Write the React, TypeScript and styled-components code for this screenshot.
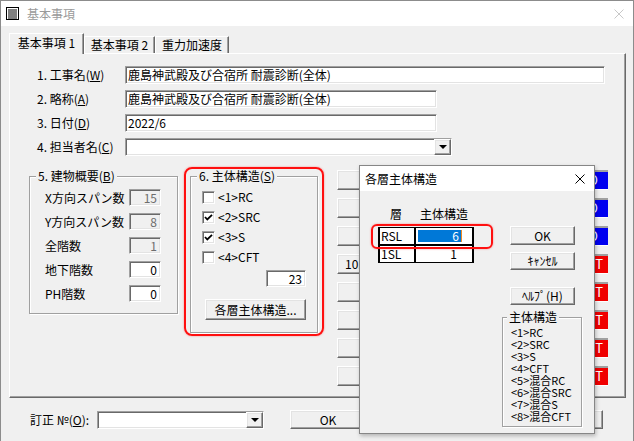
import React from "react";
import styled, { createGlobalStyle, css } from "styled-components";

const GlobalStyle = createGlobalStyle`
  html, body {
    margin: 0;
    padding: 0;
    background: #f0f0f0;
    overflow: hidden;
  }
  body {
    font-family: "Noto Sans CJK JP", "Noto Sans", sans-serif;
    font-size: 12px;
    color: #000;
  }
  * {
    box-sizing: border-box;
  }
`;

const sunken = css`
  border: 1px solid;
  border-color: #a0a0a0 #ffffff #ffffff #a0a0a0;
  box-shadow: inset 1px 1px 0 #696969, inset -1px -1px 0 #e3e3e3;
`;

const raised = css`
  border: 1px solid;
  border-color: #ffffff #696969 #696969 #ffffff;
  box-shadow: inset -1px -1px 0 #a0a0a0, inset 1px 1px 0 #e3e3e3;
  background: #f0f0f0;
`;

const Stage = styled.div`
  position: relative;
  width: 634px;
  height: 441px;
  overflow: hidden;
`;

const Window = styled.div`
  width: 634px;
  height: 441px;
  border: 1px solid #8c8c8c;
  border-bottom: none;
  background: #f0f0f0;
  display: flex;
  flex-direction: column;
`;

const TitleBar = styled.div`
  height: 25px;
  flex-shrink: 0;
  background: #ffffff;
  display: flex;
  align-items: center;
  padding: 0 9px 0 5px;
`;

const Title = styled.span<{ $inactive?: boolean }>`
  margin-left: ${(p) => (p.$inactive ? "8px" : "0")};
  color: ${(p) => (p.$inactive ? "#9a9a9a" : "#000")};
  font-size: 12px;
  line-height: 14px;
`;

const CloseBox = styled.span`
  margin-left: auto;
  display: flex;
`;

const TabStrip = styled.div`
  margin-top: 7px;
  padding-left: 8px;
  height: 20px;
  display: flex;
  align-items: flex-end;
  position: relative;
  z-index: 1;
`;

const Tab = styled.div<{ $active?: boolean; $w: number }>`
  width: ${(p) => p.$w}px;
  height: ${(p) => (p.$active ? 21 : 17)}px;
  margin-bottom: ${(p) => (p.$active ? -1 : 0)}px;
  border-left: 1px solid #ffffff;
  border-top: 1px solid #ffffff;
  border-right: 1px solid #696969;
  box-shadow: inset -1px 0 0 #a0a0a0;
  background: #f0f0f0;
  display: flex;
  align-items: center;
  justify-content: center;
  padding-bottom: ${(p) => (p.$active ? 2 : 0)}px;
  white-space: nowrap;
  line-height: 14px;
`;

const Panel = styled.div`
  margin-left: 8px;
  width: 617px;
  height: 345px;
  flex-shrink: 0;
  border-top: 1px solid #ffffff;
  border-left: 1px solid #ffffff;
  border-right: 1px solid #696969;
  border-bottom: 1px solid #696969;
  box-shadow: inset -1px -1px 0 #a0a0a0;
  padding-top: 12px;
`;

const FormGrid = styled.div`
  margin-left: 27px;
  display: grid;
  grid-template-columns: 88px auto;
  grid-auto-rows: 18px;
  row-gap: 6px;
  align-items: center;
  justify-items: start;
`;

const FieldLabel = styled.span`
  white-space: nowrap;
  line-height: 14px;
`;

const TextField = styled.div<{ $w: number }>`
  ${sunken};
  background: #ffffff;
  width: ${(p) => p.$w}px;
  height: 18px;
  padding: 0 2px;
  line-height: 16px;
  white-space: nowrap;
  overflow: hidden;
`;

const Combo = styled.div<{ $w: number }>`
  ${sunken};
  background: #ffffff;
  width: ${(p) => p.$w}px;
  height: 18px;
  display: flex;
  justify-content: flex-end;
`;

const DropButton = styled.div`
  ${raised};
  width: 17px;
  height: 16px;
  display: flex;
  align-items: center;
  justify-content: center;
`;

const Arrow = styled.span`
  width: 0;
  height: 0;
  border-left: 4px solid transparent;
  border-right: 4px solid transparent;
  border-top: 4px solid #000;
`;

const Lower = styled.div`
  margin-top: 14px;
  margin-left: 19px;
  display: flex;
  align-items: flex-start;
`;

const GroupBox = styled.div<{ $w: number; $h: number; $gap?: number }>`
  position: relative;
  margin-top: 6px;
  margin-left: ${(p) => p.$gap ?? 0}px;
  width: ${(p) => p.$w}px;
  height: ${(p) => p.$h}px;
  flex-shrink: 0;
  border: 1px solid #a0a0a0;
  box-shadow: inset 1px 1px 0 #ffffff, 1px 1px 0 #ffffff;
`;

const GroupLabel = styled.span<{ $left: number }>`
  position: absolute;
  top: -8px;
  left: ${(p) => p.$left}px;
  padding: 0 2px;
  background: #f0f0f0;
  font-size: 12px;
  line-height: 14px;
  white-space: nowrap;
`;

const BuildingGrid = styled.div`
  padding: 12px 0 0 15px;
  display: grid;
  grid-template-columns: 84px 32px;
  grid-auto-rows: 17px;
  row-gap: 7px;
  align-items: center;
`;

const NumBox = styled.div<{ $w: number; $disabled?: boolean }>`
  ${sunken};
  width: ${(p) => p.$w}px;
  height: 17px;
  background: ${(p) => (p.$disabled ? "#f0f0f0" : "#ffffff")};
  color: ${(p) => (p.$disabled ? "#6d6d6d" : "#000")};
  text-align: right;
  padding-right: 3px;
  line-height: 15px;
`;

const StructBody = styled.div`
  padding: 10px 11px 0 11px;
  display: flex;
  flex-direction: column;
`;

const CheckRow = styled.div`
  height: 20px;
  display: flex;
  align-items: center;
  gap: 3px;
  line-height: 14px;
`;

const CheckBox = styled.span`
  ${sunken};
  width: 13px;
  height: 13px;
  background: #ffffff;
  display: flex;
  align-items: center;
  justify-content: center;
`;

const EndRow = styled.div<{ $gap: number }>`
  margin-top: ${(p) => p.$gap}px;
  display: flex;
  justify-content: flex-end;
`;

const Button = styled.div<{ $w: number; $h: number }>`
  ${raised};
  width: ${(p) => p.$w}px;
  height: ${(p) => p.$h}px;
  flex-shrink: 0;
  display: flex;
  align-items: center;
  justify-content: center;
  white-space: nowrap;
  line-height: 14px;
`;

const MidColumn = styled.div`
  margin-left: 19px;
  display: flex;
  flex-direction: column;
  gap: 8px;
`;

const MidRow = styled.div`
  height: 20px;
  display: flex;
  align-items: center;
  gap: 6px;
`;

const MidButton = styled.div`
  ${raised};
  width: 217px;
  height: 20px;
  padding-left: 7px;
  display: flex;
  align-items: center;
  line-height: 14px;
`;

const ColorTag = styled.div<{ $c: string; $pad: number }>`
  width: 48px;
  height: 20px;
  background: ${(p) => p.$c};
  border-top: 2px solid #a0a0a0;
  border-bottom: 1px solid #ffffff;
  color: #ffffff;
  text-align: right;
  padding-right: ${(p) => p.$pad}px;
  font-size: 13px;
  line-height: 16px;
`;

const BottomBar = styled.div`
  flex: 1;
  display: flex;
  align-items: center;
  padding: 0 30px 0 29px;
`;

const BottomLabel = styled.span`
  width: 67px;
  white-space: nowrap;
  line-height: 14px;
`;

const Spacer = styled.div<{ $w?: number }>`
  ${(p) => (p.$w ? `width: ${p.$w}px;` : "flex: 1;")}
`;

const Dialog = styled.div`
  position: absolute;
  left: 359px;
  top: 165px;
  width: 236px;
  height: 269px;
  border: 1px solid #868686;
  background: #f0f0f0;
  box-shadow: 1px 2px 4px rgba(0, 0, 0, 0.25);
  display: flex;
  flex-direction: column;
`;

const DialogBody = styled.div`
  flex: 1;
  display: flex;
  padding: 15px 0 0 18px;
`;

const TablePane = styled.div`
  width: 96px;
  display: flex;
  flex-direction: column;
`;

const HeadRow = styled.div`
  height: 16px;
  display: flex;
  line-height: 16px;
`;

const HeadCell = styled.span<{ $w: number }>`
  width: ${(p) => p.$w}px;
  text-align: center;
`;

const LayerTable = styled.div`
  margin-top: 5px;
  display: grid;
  grid-template-columns: 36px 56px;
  grid-auto-rows: 16px;
  border: 1px solid #000;
  border-left-width: 2px;
  border-right-width: 2px;
  background: #000;
  row-gap: 2px;
`;

const LayerCell = styled.div`
  background: #ffffff;
  border-right: 2px solid #000;
  padding-left: 1px;
  line-height: 16px;
`;

const StructCell = styled.div<{ $pad: number }>`
  background: #ffffff;
  display: flex;
  align-items: center;
  justify-content: flex-end;
  padding-right: ${(p) => p.$pad}px;
  line-height: 16px;
`;

const Selected = styled.span`
  margin-left: 2px;
  flex: 1;
  height: 12px;
  background: #0078d7;
  color: #ffffff;
  text-align: right;
  padding-right: 2px;
  line-height: 12px;
  border-right: 1px solid #f08a24;
`;

const ActionPane = styled.div`
  margin-left: 28px;
  padding-top: 20px;
  display: flex;
  flex-direction: column;
  align-items: flex-start;
`;

const DialogButton = styled(Button)<{ $top: number }>`
  margin-left: 8px;
  margin-top: ${(p) => p.$top}px;
`;

const LegendBox = styled(GroupBox)`
  margin-top: 12px;
  padding: 8px 0 0 8px;
  font-size: 11px;
  line-height: 12px;
  white-space: nowrap;
`;

const Ring = styled.div<{ $r: number }>`
  position: absolute;
  border: 2px solid #ff1010;
  border-radius: ${(p) => p.$r}px;
  box-shadow: 0 0 2px rgba(255, 0, 0, 0.45);
  pointer-events: none;
`;

const GroupRing = styled(Ring)`
  left: 184px;
  top: 167px;
  width: 140px;
  height: 169px;
`;

const RowRing = styled(Ring)`
  left: 371px;
  top: 224px;
  width: 122px;
  height: 25px;
`;

const AppIcon = () => (
  <svg width="13" height="13" viewBox="0 0 13 13">
    <rect x="0.5" y="0.5" width="12" height="12" fill="#fff" stroke="#000" />
    <line x1="2" y1="3" x2="11" y2="3" stroke="#000" />
    <line x1="2" y1="5" x2="11" y2="5" stroke="#000" />
    <line x1="2" y1="7" x2="11" y2="7" stroke="#000" />
    <line x1="2" y1="9" x2="11" y2="9" stroke="#000" />
    <line x1="2" y1="11" x2="11" y2="11" stroke="#000" />
  </svg>
);

const CloseX = ({ color }: { color: string }) => (
  <svg width="10" height="10" viewBox="0 0 10 10">
    <path d="M0.5 0.5 L9.5 9.5 M9.5 0.5 L0.5 9.5" stroke={color} strokeWidth="1" />
  </svg>
);

const Check = ({ on }: { on: boolean }) => (
  <CheckBox>
    {on && (
      <svg width="9" height="9" viewBox="0 0 9 9">
        <polyline points="1,4 3.3,6.5 8,1.8" fill="none" stroke="#000" strokeWidth="1.8" />
      </svg>
    )}
  </CheckBox>
);

const building = [
  { label: "X方向スパン数", value: "15", disabled: true },
  { label: "Y方向スパン数", value: "8", disabled: true },
  { label: "全階数", value: "1", disabled: true },
  { label: "地下階数", value: "0", disabled: false },
  { label: "PH階数", value: "0", disabled: false }
];

const structures = [
  { label: "<1>RC", on: false },
  { label: "<2>SRC", on: true },
  { label: "<3>S", on: true },
  { label: "<4>CFT", on: false }
];

const blue = "#0000f0";
const red = "#f00000";

const sideRows = [
  { text: "", tag: blue, tagText: "O", pad: 10 },
  { text: "", tag: blue, tagText: "O", pad: 10 },
  { text: "", tag: blue, tagText: "O", pad: 10 },
  { text: "10.", tag: red, tagText: "T", pad: 5 },
  { text: "", tag: red, tagText: "T", pad: 5 },
  { text: "", tag: red, tagText: "T", pad: 5 },
  { text: "", tag: red, tagText: "T", pad: 5 },
  { text: "", tag: red, tagText: "T", pad: 5 }
];

const legend = [
  "<1>RC",
  "<2>SRC",
  "<3>S",
  "<4>CFT",
  "<5>混合RC",
  "<6>混合SRC",
  "<7>混合S",
  "<8>混合CFT"
];

const App: React.FC = () => {
  return (
    <Stage>
      <GlobalStyle />
      <Window>
        <TitleBar>
          <AppIcon />
          <Title $inactive>基本事項</Title>
          <CloseBox>
            <CloseX color="#c8c8c8" />
          </CloseBox>
        </TitleBar>

        <TabStrip>
          <Tab $active $w={75}>基本事項 1</Tab>
          <Tab $w={71}>基本事項 2</Tab>
          <Tab $w={74}>重力加速度</Tab>
        </TabStrip>

        <Panel>
          <FormGrid>
            <FieldLabel>
              1. 工事名(<u>W</u>)
            </FieldLabel>
            <TextField $w={480}>鹿島神武殿及び合宿所 耐震診断(全体)</TextField>
            <FieldLabel>
              2. 略称(<u>A</u>)
            </FieldLabel>
            <TextField $w={312}>鹿島神武殿及び合宿所 耐震診断(全体)</TextField>
            <FieldLabel>
              3. 日付(<u>D</u>)
            </FieldLabel>
            <TextField $w={312}>2022/6</TextField>
            <FieldLabel>
              4. 担当者名(<u>C</u>)
            </FieldLabel>
            <Combo $w={327}>
              <DropButton>
                <Arrow />
              </DropButton>
            </Combo>
          </FormGrid>

          <Lower>
            <GroupBox $w={149} $h={138}>
              <GroupLabel $left={6}>
                5. 建物概要(<u>B</u>)
              </GroupLabel>
              <BuildingGrid>
                {building.map((row) => (
                  <React.Fragment key={row.label}>
                    <FieldLabel>{row.label}</FieldLabel>
                    <NumBox $w={32} $disabled={row.disabled}>
                      {row.value}
                    </NumBox>
                  </React.Fragment>
                ))}
              </BuildingGrid>
            </GroupBox>

            <GroupBox $w={128} $h={157} $gap={12}>
              <GroupLabel $left={6}>
                6. 主体構造(<u>S</u>)
              </GroupLabel>
              <StructBody>
                {structures.map((s) => (
                  <CheckRow key={s.label}>
                    <Check on={s.on} />
                    <span>{s.label}</span>
                  </CheckRow>
                ))}
                <EndRow $gap={3}>
                  <NumBox $w={40}>23</NumBox>
                </EndRow>
                <EndRow $gap={12}>
                  <Button $w={101} $h={21}>
                    各層主体構造...
                  </Button>
                </EndRow>
              </StructBody>
            </GroupBox>

            <MidColumn>
              {sideRows.map((r, i) => (
                <MidRow key={i}>
                  <MidButton>{r.text}</MidButton>
                  <ColorTag $c={r.tag} $pad={r.pad}>
                    {r.tagText}
                  </ColorTag>
                </MidRow>
              ))}
            </MidColumn>
          </Lower>
        </Panel>

        <BottomBar>
          <BottomLabel>
            訂正 №(<u>O</u>):
          </BottomLabel>
          <Combo $w={167}>
            <DropButton>
              <Arrow />
            </DropButton>
          </Combo>
          <Spacer $w={26} />
          <Button $w={76} $h={19}>
            OK
          </Button>
          <Spacer />
          <Button $w={76} $h={19} />
        </BottomBar>
      </Window>

      <GroupRing $r={8} />

      <Dialog>
        <TitleBar>
          <Title>各層主体構造</Title>
          <CloseBox>
            <CloseX color="#000" />
          </CloseBox>
        </TitleBar>
        <DialogBody>
          <TablePane>
            <HeadRow>
              <HeadCell $w={36}>層</HeadCell>
              <HeadCell $w={60}>主体構造</HeadCell>
            </HeadRow>
            <LayerTable>
              <LayerCell>RSL</LayerCell>
              <StructCell $pad={10}>
                <Selected>6</Selected>
              </StructCell>
              <LayerCell>1SL</LayerCell>
              <StructCell $pad={15}>1</StructCell>
            </LayerTable>
          </TablePane>
          <ActionPane>
            <DialogButton $w={65} $h={19} $top={0}>
              OK
            </DialogButton>
            <DialogButton $w={65} $h={18} $top={7}>
              ｷｬﾝｾﾙ
            </DialogButton>
            <DialogButton $w={65} $h={18} $top={17}>
              ﾍﾙﾌﾟ(H)
            </DialogButton>
            <LegendBox $w={80} $h={110}>
              <GroupLabel $left={4}>主体構造</GroupLabel>
              {legend.map((l) => (
                <div key={l}>{l}</div>
              ))}
            </LegendBox>
          </ActionPane>
        </DialogBody>
      </Dialog>

      <RowRing $r={6} />
    </Stage>
  );
};

export default App;
